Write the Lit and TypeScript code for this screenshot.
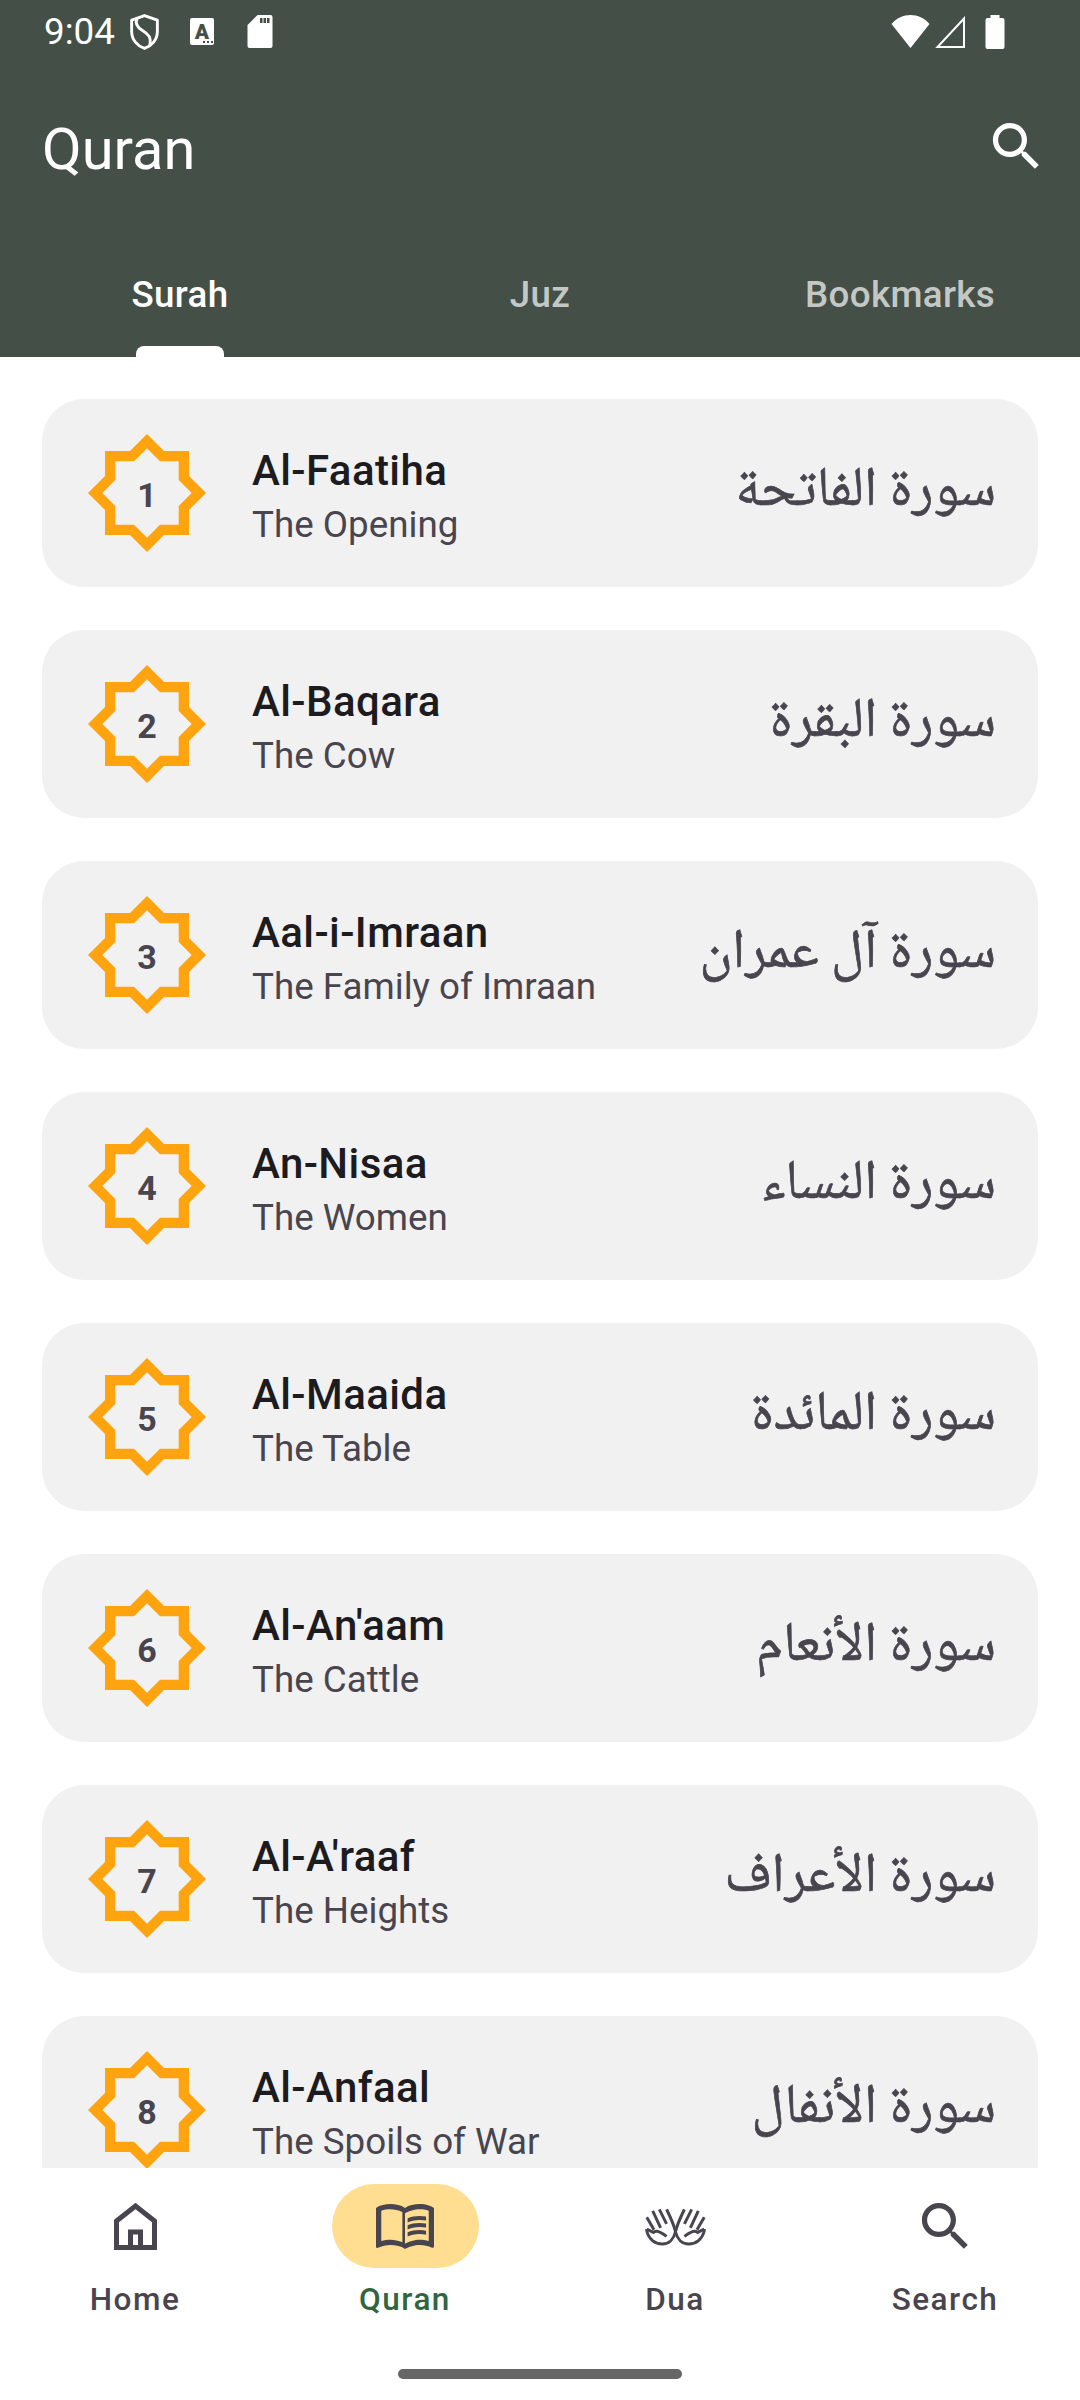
import { LitElement, html, css, svg } from "lit";
import { customElement } from "lit/decorators.js";

const SURAHS = [
  ["Al-Faatiha", "The Opening", "سورة الفاتحة"],
  ["Al-Baqara", "The Cow", "سورة البقرة"],
  ["Aal-i-Imraan", "The Family of Imraan", "سورة آل عمران"],
  ["An-Nisaa", "The Women", "سورة النساء"],
  ["Al-Maaida", "The Table", "سورة المائدة"],
  ["Al-An'aam", "The Cattle", "سورة الأنعام"],
  ["Al-A'raaf", "The Heights", "سورة الأعراف"],
  ["Al-Anfaal", "The Spoils of War", "سورة الأنفال"],
];

const SEARCH = "M15.5 14h-.79l-.28-.27C15.41 12.59 16 11.11 16 9.5 16 5.91 13.09 3 9.5 3S3 5.91 3 9.5 5.91 16 9.5 16c1.61 0 3.09-.59 4.23-1.57l.27.28v.79l5 4.99L20.49 19l-4.99-5zm-6 0C7.01 14 5 11.99 5 9.5S7.01 5 9.5 5 14 7.01 14 9.5 11.99 14 9.5 14z";

const fingers = svg`
  <path d="M345 238 C340 215 330 195 318 170"/>
  <path d="M318 214 L296 170"/>
  <path d="M300 226 L276 175"/>
  <path d="M280 232 L258 194"/>
  <path d="M257 230 C262 262 285 275 305 275 C325 275 340 260 345 238"/>
  <path d="M258 230 L278 240 C285 232 300 238 318 252"/>
`;

@customElement("app-root")
export class AppRoot extends LitElement {
  static styles = css`
    :host { display: block; width: 1080px; height: 2400px; background: #fff; font-family: Roboto, "Noto Sans", sans-serif; overflow: hidden; }
    .page { display: flex; flex-direction: column; height: 2400px; }
    .header { background: #445047; height: 357px; flex: none; color: #fff; display: flex; flex-direction: column; }
    .status { height: 63px; flex: none; display: flex; align-items: center; padding: 0 75px 0 44px; }
    .status svg { display: block; flex: none; }
    .time { font-size: 36.75px; line-height: 63px; width: 86px; flex: none; }
    .shield { margin-right: 31px; }
    .abox { position: relative; width: 24px; height: 27px; background: #fff; border-radius: 2px; color: #445047; font-size: 21px; font-weight: 900; line-height: 28px; text-align: center; margin-right: 33px; flex: none; }
    .abox::after { content: ""; position: absolute; right: 1px; bottom: 2px; width: 10px; height: 2px; background: repeating-linear-gradient(90deg, #445047 0 2px, transparent 2px 4px); }
    .spacer { flex: 1; }
    .signal { margin: 0 19px 0 4px; }
    .appbar { height: 114px; flex: none; margin-top: 26px; display: flex; align-items: center; justify-content: space-between; padding: 0 32px 0 42px; }
    .appbar h1 { margin: 6px 0 0; font-size: 57.75px; font-weight: 400; line-height: 70px; }
    .tabs { display: grid; grid-template-columns: repeat(3, 1fr); margin-top: auto; height: 56px; }
    .tab { display: flex; flex-direction: column; align-items: center; justify-content: space-between; font-size: 36.75px; font-weight: 500; letter-spacing: 0.35px; color: rgba(255,255,255,0.7); line-height: 40px; height: 82px; margin-top: -26px; }
    .tab.on { color: #fff; }
    .tab i { display: block; width: 88px; height: 11px; background: #fff; border-radius: 8px 8px 0 0; }
    .list { flex: 1; min-height: 0; overflow: hidden; padding: 42px 42px 0; display: flex; flex-direction: column; gap: 43px; }
    .card { flex: none; height: 188px; background: #f1f1f1; border-radius: 42px; display: flex; align-items: center; padding: 0 42px 0 46px; }
    .badge { width: 118px; height: 118px; display: grid; place-items: center; flex: none; margin-right: 46px; }
    .badge > * { grid-area: 1 / 1; }
    .badge span { font-size: 34px; font-weight: 700; color: #49454f; margin-top: 3px; }
    .names { flex: 1; padding-top: 10px; }
    .name { font-size: 42px; font-weight: 500; color: #1c1b1f; line-height: 52px; letter-spacing: 0.4px; }
    .sub { font-size: 36.75px; color: #49454f; line-height: 52px; margin-top: 2px; }
    .ar { font-family: "Noto Naskh Arabic", "Noto Sans Arabic", "DejaVu Sans", sans-serif; font-size: 55.5px; color: #49454f; -webkit-text-stroke: 0.7px #49454f; direction: rtl; line-height: 70px; margin-top: -1px; }
    .nav { height: 232px; flex: none; background: #fff; display: flex; flex-direction: column; }
    .items { display: grid; grid-template-columns: repeat(4, 1fr); padding-top: 16px; }
    .item { display: flex; flex-direction: column; align-items: center; color: #49454f; font-size: 31.5px; font-weight: 500; letter-spacing: 1.5px; }
    .item.on { color: #2f6640; }
    .pill { width: 147px; height: 84px; border-radius: 42px; display: flex; align-items: center; justify-content: center; margin-bottom: 13px; }
    .item.on .pill { background: #ffdd91; }
    .label { line-height: 38px; }
    .bar { width: 284px; height: 10px; border-radius: 5px; background: #666; margin: 50px auto 0; }
    .nav svg { display: block; }
  `;

  private star(n: number) {
    return html`<div class="badge">
      <svg width="118" height="118" viewBox="-59 -59 118 118">
        <path fill="#ffa30e" fill-rule="evenodd" d="M0-59 17-42H42V-17L59 0 42 17V42H17L0 59-17 42H-42V17L-59 0-42-17V-42H-17Z M0-44.7-13-31.7H-31.7V-13L-44.7 0-31.7 13V31.7H-13L0 44.7 13 31.7H31.7V13L44.7 0 31.7-13V-31.7H13Z"/>
      </svg>
      <span>${n}</span>
    </div>`;
  }

  render() {
    return html`<div class="page">
      <div class="header">
        <div class="status">
          <span class="time">9:04</span>
          <svg class="shield" width="29" height="36" viewBox="0 0 28 35" fill="none" stroke="#fff" stroke-width="2.8" stroke-linejoin="round">
            <path d="M14 1.5 L26.5 6 V17 C26.5 25 21 31 14 33.5 C7 31 1.5 25 1.5 17 V6Z"/>
            <path d="M7 4 C4.5 9 7 13 12 16 C18 19.5 21 23 19 31"/>
          </svg>
          <div class="abox">A</div>
          <svg width="26" height="33" viewBox="0 0 25 33"><path fill="#fff" fill-rule="evenodd" d="M10 0H23a2 2 0 0 1 2 2V31a2 2 0 0 1-2 2H2a2 2 0 0 1-2-2V10Z M12.5 3v5h2.5V3Zm3.5 0v5h2.5V3Zm3.5 0v5h2.5V3Z"/></svg>
          <div class="spacer"></div>
          <svg width="39" height="33" viewBox="0 0 38 33"><path fill="#fff" d="M19 33 0 9C5 3 12 0 19 0S33 3 38 9Z"/></svg>
          <svg class="signal" width="32" height="32" viewBox="0 0 30 32" fill="none" stroke="#fff" stroke-width="2"><path d="M29 2.5V31H2.5Z"/></svg>
          <svg width="20" height="34" viewBox="0 0 19 34"><path fill="#fff" d="M5 0H14V3H17a2 2 0 0 1 2 2V32a2 2 0 0 1-2 2H2a2 2 0 0 1-2-2V5a2 2 0 0 1 2-2H5Z"/></svg>
        </div>
        <div class="appbar">
          <h1>Quran</h1>
          <svg width="63" height="63" viewBox="0 0 24 24" fill="#fff"><path d="${SEARCH}"/></svg>
        </div>
        <div class="tabs">
          <div class="tab on"><span>Surah</span><i></i></div>
          <div class="tab"><span>Juz</span></div>
          <div class="tab"><span>Bookmarks</span></div>
        </div>
      </div>
      <div class="list">
        ${SURAHS.map((s, i) => html`<div class="card">
          ${this.star(i + 1)}
          <div class="names"><div class="name">${s[0]}</div><div class="sub">${s[1]}</div></div>
          <div class="ar" lang="ar">${s[2]}</div>
        </div>`)}
      </div>
      <div class="nav">
        <div class="items">
          <div class="item">
            <div class="pill"><svg width="43" height="47" viewBox="0 0 43 47" fill="none" stroke="#49454f" stroke-width="5"><path d="M2.5 44.5V18L21.5 3 40.5 18V44.5Z"/><path d="M16.5 44.5V29H26.5V44.5"/></svg></div>
            <div class="label">Home</div>
          </div>
          <div class="item on">
            <div class="pill"><svg width="58" height="45" viewBox="1 4.5 22 17" fill="#49454f"><path fill-rule="evenodd" d="M21 5c-1.11-.35-2.33-.5-3.5-.5-1.95 0-4.05.4-5.5 1.5-1.45-1.1-3.55-1.5-5.5-1.5S2.45 4.9 1 6v14.65c0 .25.25.5.5.5.1 0 .15-.05.25-.05C3.1 20.45 5.05 20 6.5 20c1.95 0 4.05.4 5.5 1.5 1.35-.85 3.8-1.5 5.5-1.5 1.65 0 3.35.3 4.75 1.05.1.05.15.05.25.05.25 0 .5-.25.5-.5V6c-.6-.45-1.25-.75-2-1zM3 18.5V7c1.11-.35 2.3-.5 3.5-.5 1.34 0 3.13.41 4.5.99v11.5C9.63 18.41 7.84 18 6.5 18c-1.2 0-2.39.15-3.5.5zm18 0c-1.1-.35-2.3-.5-3.5-.5-1.7 0-4.15.65-5.5 1.5V8c1.35-.85 3.8-1.5 5.5-1.5 1.2 0 2.4.15 3.5.5v11.5z"/><path d="M17.5 10.5c.88 0 1.73.09 2.5.26V9.24c-.79-.15-1.64-.24-2.5-.24-1.7 0-3.24.29-4.5.83v1.66c1.13-.64 2.7-.99 4.5-.99zM13 12.49v1.66c1.13-.64 2.7-.99 4.5-.99.88 0 1.73.09 2.5.26V11.9c-.79-.15-1.64-.24-2.5-.24-1.7 0-3.24.3-4.5.83zM17.5 14.33c-1.7 0-3.24.29-4.5.83v1.66c1.13-.64 2.7-.99 4.5-.99.88 0 1.73.09 2.5.26v-1.52c-.79-.16-1.64-.24-2.5-.24z"/></svg></div>
            <div class="label">Quran</div>
          </div>
          <div class="item">
            <div class="pill"><svg width="63" height="39" viewBox="250 163 190 118" fill="none" stroke="#49454f" stroke-width="9" stroke-linecap="butt">
              ${fingers}
              <g transform="translate(690 0) scale(-1 1)">${fingers}</g>
            </svg></div>
            <div class="label">Dua</div>
          </div>
          <div class="item">
            <div class="pill"><svg width="63" height="63" viewBox="0 0 24 24" fill="#49454f"><path d="${SEARCH}"/></svg></div>
            <div class="label">Search</div>
          </div>
        </div>
        <div class="bar"></div>
      </div>
    </div>`;
  }
}
